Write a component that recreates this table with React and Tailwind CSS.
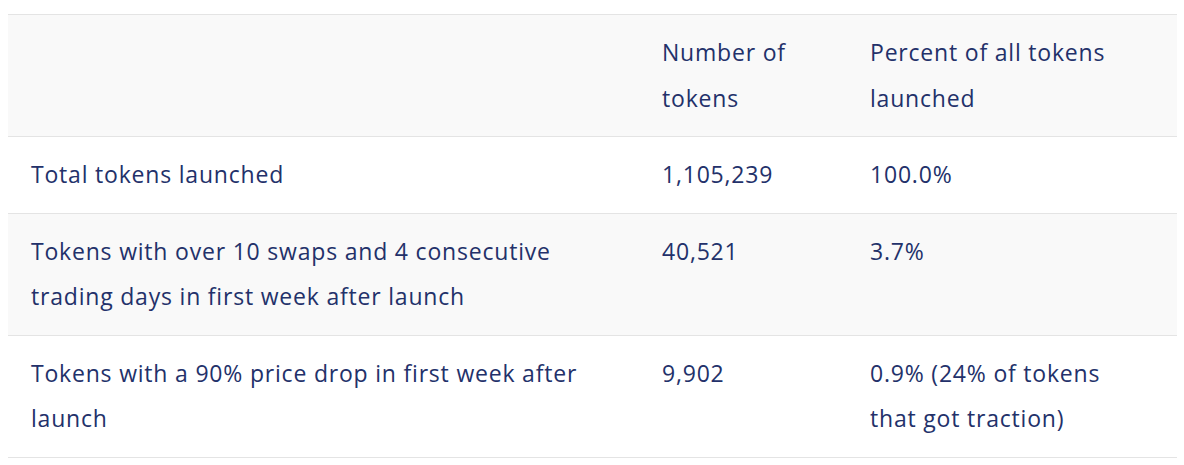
const rows = [
  { label: 'Total tokens launched', count: '1,105,239', pct: '100.0%' },
  {
    label: 'Tokens with over 10 swaps and 4 consecutive trading days in first week after launch',
    count: '40,521',
    pct: '3.7%',
  },
  {
    label: 'Tokens with a 90% price drop in first week after launch',
    count: '9,902',
    pct: '0.9% (24% of tokens that got traction)',
  },
]

export default function App() {
  return (
    <main className="w-full bg-white pt-[14px] pl-2 pr-[7px]" style={{ fontFamily: '"Open Sans", sans-serif' }}>
      <table className="w-full border-collapse table-fixed text-[23px] tracking-[0.8px] leading-[45.5px] text-[#23316a]">
        <colgroup>
          <col className="w-[631px]" />
          <col className="w-[208px]" />
          <col />
        </colgroup>
        <thead>
          <tr className="bg-[#f9f9f9] border-y border-[#e4e4e4]">
            <th className="px-[23px] py-[15px]"></th>
            <th className="px-[23px] py-[15px] text-left font-normal align-top">Number of tokens</th>
            <th className="px-[23px] py-[15px] text-left font-normal align-top">
              <div className="max-w-[255px]">Percent of all tokens launched</div>
            </th>
          </tr>
        </thead>
        <tbody>
          {rows.map((r, i) => (
            <tr key={i} className={`border-b border-[#e4e4e4] ${i % 2 === 1 ? 'bg-[#f9f9f9]' : 'bg-white'}`}>
              <td className="px-[23px] py-[15px] align-top">{r.label}</td>
              <td className="px-[23px] py-[15px] align-top">{r.count}</td>
              <td className="px-[23px] py-[15px] align-top">
                <div className="max-w-[255px]">{r.pct}</div>
              </td>
            </tr>
          ))}
        </tbody>
      </table>
    </main>
  )
}
